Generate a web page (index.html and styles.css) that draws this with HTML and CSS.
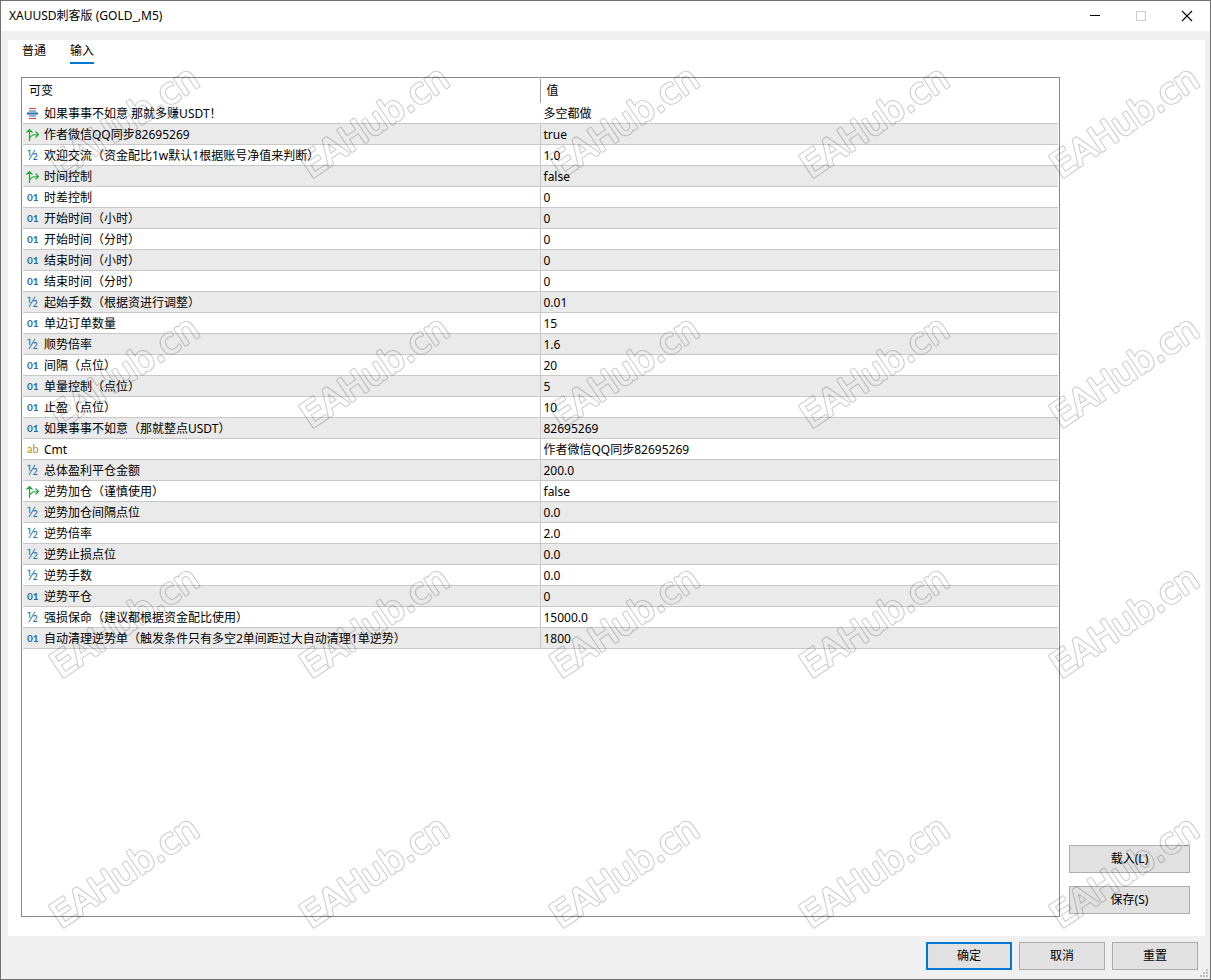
FILE: index.html
```html
<!DOCTYPE html>
<html lang="zh-CN">
<head>
<meta charset="utf-8">
<title>XAUUSD刺客版 (GOLD_,M5)</title>
<link rel="stylesheet" href="styles.css">
</head>
<body>
<svg class="defs" aria-hidden="true">
  <symbol id="i-enum" viewBox="0 0 14 14">
    <path d="M3 1.500h7M3 11.500h7" stroke="#e0403c"/>
    <path d="M3 4h7M3 9h7" stroke="#1f6ea5"/>
    <path d="M1 6.500h11" stroke="#1f6ea5" stroke-width="2"/>
  </symbol>
  <symbol id="i-bool" viewBox="0 0 14 14">
    <path d="M3.500 13V1.500M.5 4.500l3-3 3 3M3.500 10.500c2-4 4-4 9-4M9.500 3.500l3 3-3 3" fill="none" stroke="#1faa3c" stroke-width="1.200"/>
  </symbol>
</svg>
<main class="window">
  <header class="titlebar">
    <h1 class="title">XAUUSD刺客版 (GOLD_,M5)</h1>
    <div class="controls">
      <button class="control" type="button" aria-label="最小化"><svg width="12" height="12"><path d="M1 5.500h10" stroke="#000"/></svg></button>
      <button class="control" type="button" aria-label="最大化" disabled><svg width="12" height="12"><rect x="1.500" y="1.500" width="9" height="9" fill="none" stroke="#ccc"/></svg></button>
      <button class="control" type="button" aria-label="关闭"><svg width="12" height="12"><path d="M1 1l10 10M11 1L1 11" stroke="#000" stroke-width="1.100"/></svg></button>
    </div>
  </header>
  <section class="panel">
    <nav class="tabs" role="tablist">
      <button class="tab" type="button" role="tab" aria-selected="false">普通</button>
      <button class="tab tab-active" type="button" role="tab" aria-selected="true">输入</button>
    </nav>
    <div class="content">
      <div class="list">
        <table class="params">
          <thead><tr><th>可变</th><th>值</th></tr></thead>
          <tbody>
            <tr><td><svg class="icon"><use href="#i-enum"/></svg>如果事事不如意 那就多赚USDT！</td><td>多空都做</td></tr>
            <tr><td><svg class="icon"><use href="#i-bool"/></svg>作者微信QQ同步82695269</td><td>true</td></tr>
            <tr><td><span class="icon icon-double">½</span>欢迎交流（资金配比1w默认1根据账号净值来判断）</td><td>1.0</td></tr>
            <tr><td><svg class="icon"><use href="#i-bool"/></svg>时间控制</td><td>false</td></tr>
            <tr><td><span class="icon icon-int">01</span>时差控制</td><td>0</td></tr>
            <tr><td><span class="icon icon-int">01</span>开始时间（小时）</td><td>0</td></tr>
            <tr><td><span class="icon icon-int">01</span>开始时间（分时）</td><td>0</td></tr>
            <tr><td><span class="icon icon-int">01</span>结束时间（小时）</td><td>0</td></tr>
            <tr><td><span class="icon icon-int">01</span>结束时间（分时）</td><td>0</td></tr>
            <tr><td><span class="icon icon-double">½</span>起始手数（根据资进行调整）</td><td>0.01</td></tr>
            <tr><td><span class="icon icon-int">01</span>单边订单数量</td><td>15</td></tr>
            <tr><td><span class="icon icon-double">½</span>顺势倍率</td><td>1.6</td></tr>
            <tr><td><span class="icon icon-int">01</span>间隔（点位）</td><td>20</td></tr>
            <tr><td><span class="icon icon-int">01</span>单量控制（点位）</td><td>5</td></tr>
            <tr><td><span class="icon icon-int">01</span>止盈（点位）</td><td>10</td></tr>
            <tr><td><span class="icon icon-int">01</span>如果事事不如意（那就整点USDT）</td><td>82695269</td></tr>
            <tr><td><span class="icon icon-string">ab</span>Cmt</td><td>作者微信QQ同步82695269</td></tr>
            <tr><td><span class="icon icon-double">½</span>总体盈利平仓金额</td><td>200.0</td></tr>
            <tr><td><svg class="icon"><use href="#i-bool"/></svg>逆势加仓（谨慎使用）</td><td>false</td></tr>
            <tr><td><span class="icon icon-double">½</span>逆势加仓间隔点位</td><td>0.0</td></tr>
            <tr><td><span class="icon icon-double">½</span>逆势倍率</td><td>2.0</td></tr>
            <tr><td><span class="icon icon-double">½</span>逆势止损点位</td><td>0.0</td></tr>
            <tr><td><span class="icon icon-double">½</span>逆势手数</td><td>0.0</td></tr>
            <tr><td><span class="icon icon-int">01</span>逆势平仓</td><td>0</td></tr>
            <tr><td><span class="icon icon-double">½</span>强损保命（建议都根据资金配比使用）</td><td>15000.0</td></tr>
            <tr><td><span class="icon icon-int">01</span>自动清理逆势单（触发条件只有多空2单间距过大自动清理1单逆势）</td><td>1800</td></tr>
          </tbody>
        </table>
      </div>
      <div class="side">
        <button class="btn" type="button">载入(L)</button>
        <button class="btn" type="button">保存(S)</button>
      </div>
    </div>
  </section>
  <footer class="footer">
    <button class="btn btn-default" type="button">确定</button>
    <button class="btn" type="button">取消</button>
    <button class="btn" type="button">重置</button>
  </footer>
  <svg class="grip" width="9" height="9" aria-hidden="true"><path d="M6 0h2v2h-2zM3 3h2v2h-2zM6 3h2v2h-2zM0 6h2v2h-2zM3 6h2v2h-2zM6 6h2v2h-2z" fill="#bfbfbf"/></svg>
  <svg class="watermark" aria-hidden="true">
    <defs>
      <mask id="outline" maskUnits="userSpaceOnUse" x="0" y="0" width="250" height="250">
        <g class="mark" transform="translate(61 179) rotate(-34)">
          <text class="mark-outer">EAHub.cn</text>
          <text class="mark-inner">EAHub.cn</text>
        </g>
      </mask>
      <pattern id="tile" width="250" height="250" patternUnits="userSpaceOnUse">
        <rect width="250" height="250" fill="#000" fill-opacity=".2" mask="url(#outline)"/>
      </pattern>
    </defs>
    <rect width="100%" height="100%" fill="url(#tile)"/>
  </svg>
</main>
</body>
</html>
```
FILE: styles.css
```css
* { box-sizing: border-box; }

body {
  margin: 0;
  font: 12px/16px "Noto Sans", "Noto Sans CJK SC", sans-serif;
  color: #000;
}

button { font: inherit; color: inherit; }

.defs { position: absolute; width: 0; height: 0; }

.window {
  position: relative;
  display: flex;
  flex-direction: column;
  min-height: 100vh;
  border: 1px solid #707070;
  background: #f0f0f0;
}

.titlebar {
  display: flex;
  justify-content: space-between;
  height: 30px;
  padding-left: 8px;
  background: #fff;
}

.title { margin: 0; font-size: 12px; font-weight: 400; line-height: 29px; }

.controls { display: flex; }

.control {
  display: flex;
  align-items: center;
  justify-content: center;
  width: 46px;
  padding: 0;
  border: 0;
  background: none;
}

.panel {
  display: flex;
  flex: 1;
  flex-direction: column;
  margin: 9px 5px 0 7px;
  padding: 0 15px 19px 13px;
  background: #fff;
}

.tabs { display: flex; gap: 24px; margin-bottom: 13px; padding-left: 1px; }

.tab {
  height: 24px;
  padding: 0;
  border: 0;
  border-bottom: 2px solid transparent;
  background: none;
}

.tab-active { border-color: #0078d7; }

.content { display: flex; flex: 1; gap: 9px; }

.list { flex: 1; padding: 1px; border: 1px solid #828790; }

.params {
  width: 100%;
  border-collapse: separate;
  border-spacing: 0;
  table-layout: fixed;
}

.params th {
  height: 24px;
  padding: 0 6px;
  font-weight: 400;
  text-align: left;
}

.params th:first-child { border-right: 1px solid #a0a0a0; }

.params td {
  height: 21px;
  padding: 1px 3px 0;
  border-bottom: 1px solid #c8c8c8;
  white-space: nowrap;
}

.params tr:nth-child(even) { background: #eaeaea; }

.params td:first-child { border-right: 1px solid #c8c8c8; }

.params tbody tr:first-child td:first-child { border-right-color: transparent; }

.icon {
  display: inline-block;
  width: 14px;
  height: 14px;
  margin-right: 4px;
  vertical-align: middle;
}

.icon-int,
.icon-double,
.icon-string { padding-left: 1px; }

.icon-int { color: #1f6ea5; font: 700 10px/12px "Lato", sans-serif; }
.icon-double { color: #1f6ea5; font: 14px/12px "Open Sans", sans-serif; }
.icon-string { color: #c08a20; font: 11px/12px "Lato", sans-serif; }

.side {
  display: flex;
  flex-direction: column;
  justify-content: flex-end;
  gap: 13px;
  width: 121px;
  padding-bottom: 3px;
}

.btn {
  height: 28px;
  padding: 0;
  border: 1px solid #adadad;
  background: #e1e1e1;
}

.btn-default { border: 2px solid #0078d7; }

.footer {
  display: flex;
  justify-content: flex-end;
  gap: 7px;
  padding: 6px 12px 9px;
}

.footer .btn { width: 86px; }

.grip { position: absolute; right: 1px; bottom: 1px; }

.watermark {
  position: absolute;
  inset: -1px;
  width: calc(100% + 2px);
  height: calc(100% + 2px);
  pointer-events: none;
}

.mark { font: 35px "DejaVu Sans", sans-serif; stroke-linejoin: round; }
.mark-outer { fill: #fff; stroke: #fff; stroke-width: 3px; }
.mark-inner { fill: #000; stroke: #000; stroke-width: 1px; }
```
